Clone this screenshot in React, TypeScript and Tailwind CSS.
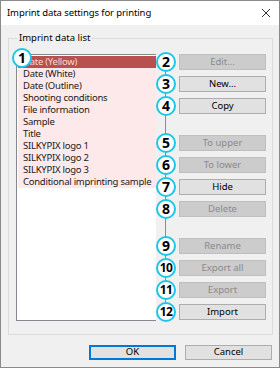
import React from 'react';

const items = [
  'Date (Yellow)',
  'Date (White)',
  'Date (Outline)',
  'Shooting conditions',
  'File information',
  'Sample',
  'Title',
  'SILKYPIX logo 1',
  'SILKYPIX logo 2',
  'SILKYPIX logo 3',
  'Conditional imprinting sample',
];

type Btn = { n: number; label: string; enabled: boolean };

const groups: Btn[][] = [
  [
    { n: 2, label: 'Edit...', enabled: false },
    { n: 3, label: 'New...', enabled: true },
    { n: 4, label: 'Copy', enabled: true },
  ],
  [
    { n: 5, label: 'To upper', enabled: false },
    { n: 6, label: 'To lower', enabled: false },
    { n: 7, label: 'Hide', enabled: true },
    { n: 8, label: 'Delete', enabled: false },
  ],
  [
    { n: 9, label: 'Rename', enabled: false },
    { n: 10, label: 'Export all', enabled: false },
    { n: 11, label: 'Export', enabled: false },
    { n: 12, label: 'Import', enabled: true },
  ],
];

function Badge({ n }: { n: number }) {
  return (
    <div className="relative z-10 w-[20px] h-[20px] -my-[2px] shrink-0 rounded-full border-2 border-[#1cc6e8] bg-white flex items-center justify-center">
      <span className={`font-bold text-black leading-none ${n > 9 ? 'text-[12px] tracking-[-0.5px]' : 'text-[14px]'}`}>{n}</span>
    </div>
  );
}

function Button({ label, enabled }: { label: string; enabled: boolean }) {
  return (
    <div
      className={`h-[16px] w-[87px] flex items-center justify-center text-[9.5px] border ${
        enabled ? 'border-[#adadad] bg-[#e1e1e1] text-black' : 'border-[#bfbfbf] bg-[#cccccc] text-[#8a8a8a]'
      }`}
    >
      {label}
    </div>
  );
}

export default function App() {
  return (
    <div
      className="w-[280px] h-[368px] flex flex-col border border-[#8a8a8a] bg-[#f0f0f0] overflow-hidden"
      style={{ fontFamily: '"Noto Sans", "Open Sans", sans-serif' }}
    >
      {/* title bar */}
      <div className="h-[24px] shrink-0 bg-white flex items-center justify-between pl-[6px] pr-[8px]">
        <span className="text-[9.5px] tracking-[-0.1px] text-black">Imprint data settings for printing</span>
        <svg width="10" height="10" viewBox="0 0 10 10" className="text-[#333]">
          <path d="M1 1 L9 9 M9 1 L1 9" stroke="currentColor" strokeWidth="1" />
        </svg>
      </div>

      <div className="flex flex-col px-[7px] pt-[6px]">
        <fieldset className="border border-[#dcdcdc] h-[304px] pl-[7px] pr-[6px] pt-[9px] m-0">
          <legend className="ml-[2px] px-[1px] text-[9.5px] leading-[14px] text-black">Imprint data list</legend>
          <div className="flex">
            {/* list */}
            <div className="relative w-[140px] h-[267px] border border-[#828790] border-r-0 bg-white">
              <div className="absolute -left-[5px] -top-[5px] z-10">
                <Badge n={1} />
              </div>
              <div className="m-[1px] mr-0 bg-[#fde9e9] text-[9.5px] tracking-[-0.25px] text-[#1a1a1a]">
                {items.map((t, i) => (
                  <div
                    key={t}
                    className={`h-[12px] leading-[12px] pl-[5px] whitespace-nowrap ${
                      i === 0 ? 'bg-[#b7504f] text-[#f7d8d0]' : ''
                    }`}
                  >
                    {t}
                  </div>
                ))}
              </div>
            </div>

            {/* buttons */}
            <div className="relative flex flex-col">
              <div className="absolute left-[9px] top-[8px] bottom-[8px] w-px bg-[#8c8c8c]" />
              {groups.map((g, gi) => (
                <div key={gi} className={`flex flex-col gap-[6px] ${gi > 0 ? 'mt-[21px]' : ''}`}>
                  {g.map((b) => (
                    <div key={b.n} className="flex items-center gap-[3px]">
                      <Badge n={b.n} />
                      <Button label={b.label} enabled={b.enabled} />
                    </div>
                  ))}
                </div>
              ))}
            </div>
          </div>
        </fieldset>
      </div>

      <div className="flex justify-end gap-[9px] pr-[7px] mt-[10px]">
        <div className="h-[15px] w-[87px] flex items-center justify-center text-[9.5px] border-2 border-[#0078d7] bg-[#e1e1e1] text-black">
          OK
        </div>
        <div className="h-[15px] w-[87px] flex items-center justify-center text-[9.5px] border border-[#adadad] bg-[#e1e1e1] text-black">
          Cancel
        </div>
      </div>
    </div>
  );
}
